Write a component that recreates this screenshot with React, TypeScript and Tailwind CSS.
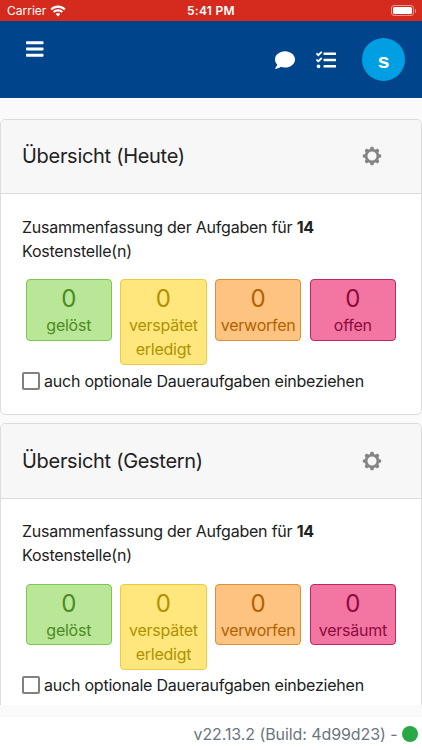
import { useState } from 'react';
import { FaBars, FaComment, FaTasks } from 'react-icons/fa';
import clsx from 'clsx';

interface Tile {
  count: number;
  lines: string[];
  className: string;
}

interface Overview {
  id: string;
  title: string;
  costCenters: number;
  tiles: Tile[];
}

const GREEN = 'border-[#7dc654] bg-[#b9e797] text-[#4b8b24]';
const YELLOW = 'border-[#edcb3e] bg-[#ffe77e] text-[#b09100]';
const ORANGE = 'border-[#db9038] bg-[#fec381] text-[#b26200]';
const PINK = 'border-[#b92862] bg-[#f275a2] text-[#8c0b3d]';

const overviews: Overview[] = [
  {
    id: 'heute',
    title: 'Übersicht (Heute)',
    costCenters: 14,
    tiles: [
      { count: 0, lines: ['gelöst'], className: GREEN },
      { count: 0, lines: ['verspätet', 'erledigt'], className: YELLOW },
      { count: 0, lines: ['verworfen'], className: ORANGE },
      { count: 0, lines: ['offen'], className: PINK },
    ],
  },
  {
    id: 'gestern',
    title: 'Übersicht (Gestern)',
    costCenters: 14,
    tiles: [
      { count: 0, lines: ['gelöst'], className: GREEN },
      { count: 0, lines: ['verspätet', 'erledigt'], className: YELLOW },
      { count: 0, lines: ['verworfen'], className: ORANGE },
      { count: 0, lines: ['versäumt'], className: PINK },
    ],
  },
];

const TEETH = [0, 45, 90, 135, 180, 225, 270, 315];

function GearIcon() {
  return (
    <svg viewBox="0 0 20 20" className="h-5 w-5 text-[#858585]" aria-hidden="true">
      <circle cx="10" cy="10" r="5.9" fill="none" stroke="currentColor" strokeWidth="2.7" />
      {TEETH.map((deg) => (
        <path
          key={deg}
          d="M7.7 4.4 8.4 1.5Q8.5.8 9.1.8h1.8q.6 0 .7.7l.7 2.9Z"
          fill="currentColor"
          transform={`rotate(${deg} 10 10)`}
        />
      ))}
    </svg>
  );
}

function WifiIcon() {
  return (
    <svg viewBox="0 0 16 12" className="h-3 w-4" fill="none" stroke="white" strokeWidth="2.1" aria-hidden="true">
      <path d="M1.2 4.4a9.6 9.6 0 0 1 13.6 0" />
      <path d="M3.7 7.1a6.1 6.1 0 0 1 8.6 0" />
      <path d="M5.7 9 8 11.4 10.3 9a3.3 3.3 0 0 0-4.6 0Z" fill="white" stroke="none" />
    </svg>
  );
}

function StatusBar() {
  return (
    <div className="grid h-[21px] grid-cols-3 items-center bg-[#d52b1e] text-white">
      <div className="flex items-center gap-1 pl-[7px]">
        <span className="text-[12px] leading-none">Carrier</span>
        <WifiIcon />
      </div>
      <span className="text-center text-[12px] leading-none font-semibold tracking-[0.3px]">5:41 PM</span>
      <div className="flex items-center justify-end gap-px pr-[6px]">
        <span className="h-[11px] w-[23px] rounded-[3px] border border-white/50 p-px">
          <span className="block h-full w-full rounded-[1.5px] bg-white" />
        </span>
        <span className="h-1 w-px rounded-r bg-white/50" />
      </div>
    </div>
  );
}

function NavBar() {
  return (
    <header className="flex h-[77px] items-start bg-[#00458b] pr-[17px] pl-[26px] text-white">
      <button type="button" aria-label="Menü" className="mt-[17.5px]">
        <FaBars className="h-5 w-[17.5px]" />
      </button>
      <div className="mt-[17px] ml-auto flex items-center">
        <FaComment className="h-5 w-5" />
        <FaTasks className="ml-[21px] h-5 w-5" />
        <span className="ml-[26px] flex h-[43px] w-[43px] items-center justify-center rounded-full bg-[#009fe3] pt-[2px] font-['Liberation_Sans',sans-serif] text-[21px] font-bold">
          s
        </span>
      </div>
    </header>
  );
}

function OverviewCard({ overview }: { overview: Overview }) {
  const [optional, setOptional] = useState(false);

  return (
    <section className="h-[296px] shrink-0 rounded-[5px] border border-[#dcdcdc] bg-white">
      <div className="flex h-[74.5px] items-center justify-between rounded-t-[4px] border-b border-[#dcdcdc] bg-[#f7f7f7] pr-[39px] pl-[21px]">
        <h2 className="text-[20px] tracking-[-0.3px]">{overview.title}</h2>
        <GearIcon />
      </div>
      <div className="px-[21px] pt-[20.5px]">
        <p className="text-[16px] leading-[24.4px] tracking-[-0.22px]">
          Zusammenfassung der Aufgaben für <b>{overview.costCenters}</b>
          <br />
          Kostenstelle(n)
        </p>
        <div className="mt-[15.7px] -ml-px flex items-start gap-[8.4px] pl-[4.6px]">
          {overview.tiles.map((tile) => (
            <div
              key={tile.lines.join(' ')}
              className={clsx('w-[86.3px] shrink-0 rounded-[4px] border pt-[5px] pb-[2.5px] text-center', tile.className)}
            >
              <div className="text-[24px] leading-[28px]">{tile.count}</div>
              {tile.lines.map((line) => (
                <div key={line} className="text-[16px] leading-[24.4px] tracking-[-0.25px]">
                  {line}
                </div>
              ))}
            </div>
          ))}
        </div>
        <label
          className="mt-[3px] flex h-[25px] items-center gap-[4px] text-[16px] tracking-[-0.22px] whitespace-nowrap"
          htmlFor={overview.id}
        >
          <input
            id={overview.id}
            type="checkbox"
            checked={optional}
            onChange={(e) => setOptional(e.target.checked)}
            className="h-[18px] w-[18px] appearance-none rounded-[2px] border-2 border-[#808080] bg-white checked:bg-[#808080]"
          />
          auch optionale Daueraufgaben einbeziehen
        </label>
      </div>
    </section>
  );
}

export default function App() {
  return (
    <div className="flex h-[750px] w-[422px] flex-col overflow-hidden bg-[#fafafa] font-['Inter','Liberation_Sans',sans-serif] text-[#212121]">
      <StatusBar />
      <NavBar />
      <main className="flex h-[607px] flex-col gap-[8.5px] overflow-hidden pt-[20.5px]">
        {overviews.map((overview) => (
          <OverviewCard key={overview.id} overview={overview} />
        ))}
      </main>
      <footer className="mt-[12px] flex flex-1 items-center justify-end bg-white pr-[4.5px] text-[16px] tracking-[-0.08px] text-[#6c757d]">
        <span>v22.13.2 (Build: 4d99d23) -</span>
        <span className="ml-[4px] h-4 w-4 rounded-full bg-[#28a745]" />
      </footer>
    </div>
  );
}
